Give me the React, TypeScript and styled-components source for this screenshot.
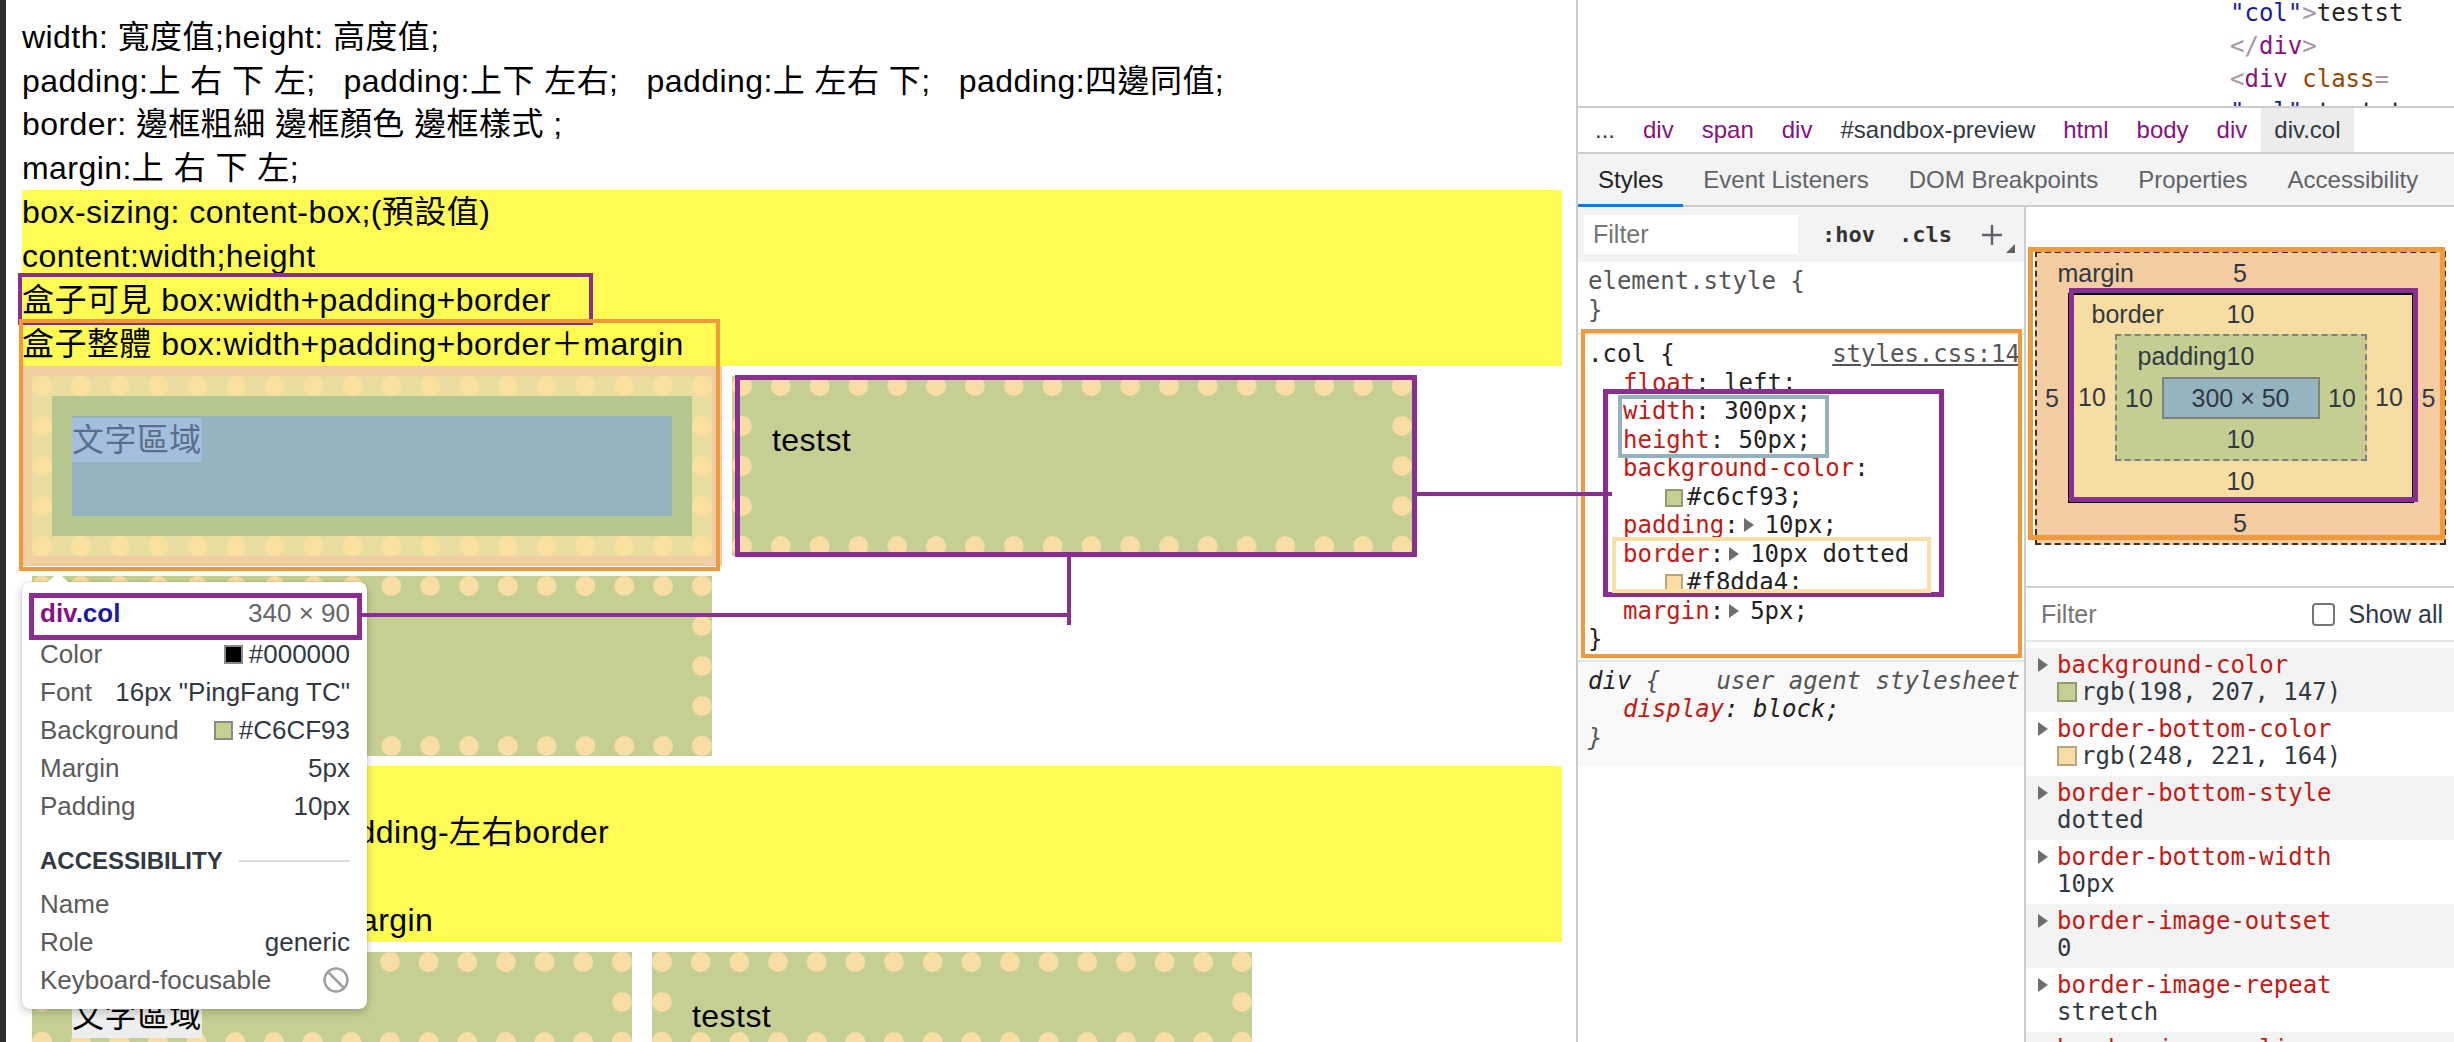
import React from "react";
import styled, { createGlobalStyle } from "styled-components";

const SANS = `"Liberation Sans", "Noto Sans CJK TC", sans-serif`;
const UI = `"Liberation Sans", "Noto Sans", sans-serif`;
const MONO = `"DejaVu Sans Mono", "Liberation Mono", monospace`;

const PURPLE = "#8a2f8f";
const ORANGE = "#f3993a";
const STEEL = "#93b2be";
const SAND = "#fbdfa6";

const GlobalStyle = createGlobalStyle`
  html, body { margin: 0; padding: 0; background: #ffffff; overflow: hidden; }
  #root { width: 2454px; height: 1042px; }
`;

const Screen = styled.div`
  position: relative;
  display: flex;
  width: 2454px;
  height: 1042px;
  overflow: hidden;
  background: #ffffff;
`;

const WindowEdge = styled.div`
  flex: none;
  width: 6px;
  background: #2e2e2e;
`;

/* ---------------- page ---------------- */

const Page = styled.main`
  flex: none;
  box-sizing: border-box;
  width: 1570px;
  height: 100%;
  padding: 16px 14px 0 16px;
  overflow: hidden;
  font-family: ${SANS};
  font-size: 32px;
  letter-spacing: 0.45px;
  color: #000;
`;

const TextLine = styled.div`
  line-height: 43.5px;
  white-space: pre;
`;

const Note = styled.section`
  background: #fefc54;
`;

const NoteLine = styled.div`
  line-height: 44px;
  white-space: pre;
`;

const ColRow = styled.div`
  display: flex;
  flex-wrap: wrap;
`;

const ColSlot = styled.div<{ $tint?: boolean }>`
  flex: none;
  padding: 10px;
  background: ${(p) => (p.$tint ? "#f2cca3" : "transparent")};
`;

const ColBox = styled.div<{ $borderBox?: boolean; $tint?: boolean }>`
  box-sizing: ${(p) => (p.$borderBox ? "border-box" : "content-box")};
  width: 600px;
  height: 100px;
  padding: 20px;
  border: 20px dotted ${(p) => (p.$tint ? "#fbe1a0" : "#f8dda4")};
  background: ${(p) =>
    p.$tint
      ? "linear-gradient(#b3c78f, #b3c78f) padding-box, #e9dea0"
      : "#c6cf93"};
`;

const ColContent = styled.div<{ $tint?: boolean }>`
  box-sizing: border-box;
  height: 100%;
  padding-top: 2px;
  line-height: 44px;
  white-space: nowrap;
  background: ${(p) => (p.$tint ? "#95b4c0" : "transparent")};
`;

const TextChip = styled.span<{ $tint?: boolean }>`
  display: inline-block;
  vertical-align: top;
  height: 44px;
  background: ${(p) => (p.$tint ? "#a4bedd" : "#eeeeee")};
  color: ${(p) => (p.$tint ? "#5b6e89" : "#000")};
`;

/* ---------------- overlays ---------------- */

type Rect = { $x: number; $y: number; $w: number; $h: number };

const Frame = styled.div<Rect & { $bw: number; $c: string }>`
  position: absolute;
  left: ${(p) => p.$x}px;
  top: ${(p) => p.$y}px;
  width: ${(p) => p.$w}px;
  height: ${(p) => p.$h}px;
  box-sizing: border-box;
  border: ${(p) => p.$bw}px solid ${(p) => p.$c};
  pointer-events: none;
`;

const Wire = styled.div<Rect>`
  position: absolute;
  left: ${(p) => p.$x}px;
  top: ${(p) => p.$y}px;
  width: ${(p) => p.$w}px;
  height: ${(p) => p.$h}px;
  background: ${PURPLE};
  pointer-events: none;
`;

/* ---------------- tooltip ---------------- */

const Tooltip = styled.div`
  position: absolute;
  left: 22px;
  top: 582px;
  width: 345px;
  height: 427px;
  box-sizing: border-box;
  padding: 9px 17px 0 18px;
  background: #fff;
  border-radius: 8px;
  box-shadow: 0 3px 10px rgba(0, 0, 0, 0.22), 0 0 0 1px rgba(0, 0, 0, 0.05);
  font-family: ${UI};
  font-size: 26px;
  color: #5a5a5a;

  &::before {
    content: "";
    position: absolute;
    left: 26px;
    top: -10px;
    border: 10px solid transparent;
    border-top: 0;
    border-bottom-color: #fff;
  }
`;

const TipHead = styled.div`
  height: 44px;
  display: flex;
  align-items: center;
  justify-content: space-between;
`;

const TipTag = styled.span`
  font-weight: bold;
  color: #881280;
`;

const TipClass = styled.span`
  color: #1a1aa6;
`;

const TipDims = styled.span`
  color: #666;
`;

const TipRow = styled.div`
  height: 38px;
  display: flex;
  align-items: center;
  justify-content: space-between;
  white-space: nowrap;
`;

const TipValue = styled.span`
  display: flex;
  align-items: center;
  gap: 6px;
  color: #303942;
`;

const TipSwatch = styled.span<{ $c: string }>`
  width: 19px;
  height: 19px;
  box-sizing: border-box;
  border: 2px solid #8a8a8a;
  background: ${(p) => p.$c};
`;

const TipSection = styled.div`
  margin-top: 16px;
  margin-bottom: 4px;
  height: 40px;
  display: flex;
  align-items: center;
  gap: 16px;
  font-size: 24px;
  font-weight: bold;
  color: #303942;
`;

const TipRule = styled.span`
  flex: 1;
  height: 2px;
  background: #dcdcdc;
`;

/* ---------------- devtools ---------------- */

const DevTools = styled.aside`
  flex: 1;
  min-width: 0;
  display: flex;
  flex-direction: column;
  border-left: 2px solid #cbcbcb;
  background: #fff;
  font-family: ${UI};
  color: #303942;
`;

const Tree = styled.div`
  flex: none;
  height: 108px;
  box-sizing: border-box;
  border-bottom: 2px solid #cdcdcd;
  overflow: hidden;
  padding-left: 652px;
  font-family: ${MONO};
  font-size: 24px;
  line-height: 33px;
`;

const TreeLines = styled.div`
  margin-top: -3px;
  white-space: pre;
`;

const tokenColors = {
  tag: "#881280",
  bracket: "#a894a6",
  attr: "#994500",
  value: "#1a1aa6",
  text: "#222222",
};

const Tk = styled.span<{ $k: keyof typeof tokenColors }>`
  color: ${(p) => tokenColors[p.$k]};
`;

const Crumbs = styled.nav`
  flex: none;
  height: 46px;
  box-sizing: border-box;
  border-bottom: 2px solid #cdcdcd;
  display: flex;
  align-items: stretch;
  padding-left: 3px;
  font-size: 24px;
  white-space: nowrap;
`;

const Crumb = styled.span<{ $tag?: boolean; $active?: boolean }>`
  display: flex;
  align-items: center;
  padding: 0 ${(p) => (p.$active ? 13 : 14)}px;
  color: ${(p) => (p.$tag ? "#881280" : "#303942")};
  background: ${(p) => (p.$active ? "#ececec" : "transparent")};
`;

const Tabs = styled.div`
  flex: none;
  height: 53px;
  display: flex;
  background: #f3f3f3;
  box-shadow: inset 0 -2px 0 #cdcdcd;
  font-size: 24px;
  white-space: nowrap;
`;

const Tab = styled.span<{ $active?: boolean }>`
  display: flex;
  align-items: center;
  padding: 0 20px 2px;
  color: ${(p) => (p.$active ? "#202124" : "#5f6368")};
  box-shadow: ${(p) => (p.$active ? "inset 0 -3px 0 #1a73e8" : "none")};
`;

const Panes = styled.div`
  flex: 1;
  min-height: 0;
  display: flex;
`;

const StylesPane = styled.section`
  flex: none;
  width: 448px;
  box-sizing: border-box;
  border-right: 2px solid #cdcdcd;
  overflow: hidden;
`;

const StylesToolbar = styled.div`
  height: 55px;
  display: flex;
  align-items: center;
  padding-left: 6px;
  background: #f3f3f3;
`;

const FilterField = styled.input`
  flex: none;
  width: 214px;
  height: 39px;
  box-sizing: border-box;
  margin: 0;
  border: none;
  outline: none;
  padding: 0 0 0 9px;
  background: #fff;
  font-family: ${UI};
  font-size: 25px;
  color: #333;
  &::placeholder {
    color: #757575;
  }
`;

const ToolText = styled.span<{ $gap: number }>`
  margin-left: ${(p) => p.$gap}px;
  font-family: ${MONO};
  font-weight: bold;
  font-size: 22px;
  color: #333;
`;

const ToolIcon = styled.svg<{ $gap: number }>`
  flex: none;
  margin-left: ${(p) => p.$gap}px;
`;

const CornerMark = styled.svg`
  flex: none;
  align-self: flex-end;
  margin: 0 0 9px 3px;
`;

const Rule = styled.div<{ $ua?: boolean; $pb: number }>`
  padding: 5px 4px ${(p) => p.$pb}px 10px;
  border-bottom: 2px solid ${(p) => (p.$ua ? "#f9f9f9" : "#e4e4e4")};
  background: ${(p) => (p.$ua ? "#f9f9f9" : "#fff")};
  font-family: ${MONO};
  font-size: 24px;
  line-height: 28.5px;
  color: #222;
  white-space: pre;
  font-style: ${(p) => (p.$ua ? "italic" : "normal")};
`;

const SelectorLine = styled.div`
  display: flex;
  justify-content: space-between;
`;

const Muted = styled.span`
  color: #555;
`;

const SourceLink = styled.span`
  color: #555;
  text-decoration: underline;
`;

const Decl = styled.div<{ $indent?: number }>`
  padding-left: ${(p) => p.$indent ?? 35}px;
`;

const PropName = styled.span`
  color: #c41a16;
`;

const Expander = styled.span`
  display: inline-block;
  width: 0;
  height: 0;
  border-top: 7px solid transparent;
  border-bottom: 7px solid transparent;
  border-left: 10px solid #6e6e6e;
  margin: 0 11px 0 5px;
  vertical-align: 1px;
`;

const Swatch = styled.span<{ $c: string; $size: number }>`
  display: inline-block;
  width: ${(p) => p.$size}px;
  height: ${(p) => p.$size}px;
  box-sizing: border-box;
  border: 2px solid rgba(0, 0, 0, 0.25);
  background: ${(p) => p.$c};
  margin-right: 4px;
  vertical-align: -2px;
`;

const ComputedPane = styled.section`
  flex: 1;
  min-width: 0;
  overflow: hidden;
`;

const BoxModelArea = styled.div`
  height: 381px;
  box-sizing: border-box;
  border-bottom: 2px solid #d0d0d0;
  display: flex;
  justify-content: center;
  align-items: flex-start;
  padding-top: 44px;
  font-family: ${UI};
  font-size: 25px;
  color: #303942;
`;

type LayerKind = "margin" | "border" | "padding";

const layerSpec: Record<
  LayerKind,
  { border: string; bg: string; top: number; bottom: number; label: number }
> = {
  margin: { border: "2px dashed #333", bg: "#f3cca2", top: 40, bottom: 40, label: 21 },
  border: { border: "2px solid #000", bg: "#f8dda3", top: 39, bottom: 40, label: 22 },
  padding: { border: "2px dashed #808080", bg: "#c4ce93", top: 41, bottom: 40, label: 21 },
};

const Layer = styled.div<{ $kind: LayerKind }>`
  display: flex;
  flex-direction: column;
  border: ${(p) => layerSpec[p.$kind].border};
  background: ${(p) => layerSpec[p.$kind].bg};
`;

const LayerTop = styled.div<{ $kind: LayerKind }>`
  height: ${(p) => layerSpec[p.$kind].top}px;
  display: grid;
  grid-template-columns: 1fr auto 1fr;
  align-items: center;
  white-space: nowrap;
`;

const LayerLabel = styled.span<{ $kind: LayerKind }>`
  padding-left: ${(p) => layerSpec[p.$kind].label}px;
`;

const LayerMiddle = styled.div`
  display: flex;
  align-items: stretch;
`;

const LayerSide = styled.span<{ $w: number }>`
  width: ${(p) => p.$w}px;
  display: flex;
  align-items: center;
  justify-content: center;
`;

const LayerBottom = styled.div<{ $kind: LayerKind }>`
  height: ${(p) => layerSpec[p.$kind].bottom}px;
  display: flex;
  align-items: center;
  justify-content: center;
`;

const ContentBox = styled.div`
  width: 158px;
  height: 42px;
  box-sizing: border-box;
  border: 2px solid #808080;
  background: #95b4c0;
  display: flex;
  align-items: center;
  justify-content: center;
  white-space: nowrap;
`;

const ComputedFilter = styled.div`
  height: 54px;
  box-sizing: border-box;
  border-bottom: 2px solid #e6e6e6;
  display: flex;
  align-items: center;
  justify-content: space-between;
  padding: 0 11px 0 15px;
  font-size: 25px;
`;

const SmallFilter = styled(FilterField)`
  width: 200px;
  padding: 0;
`;

const ShowAll = styled.label`
  display: flex;
  align-items: center;
  gap: 14px;
  color: #303942;
  white-space: nowrap;
`;

const CheckBox = styled.span`
  width: 23px;
  height: 23px;
  box-sizing: border-box;
  border: 2px solid #767676;
  border-radius: 4px;
  background: #fff;
`;

const ComputedList = styled.div`
  padding-top: 6px;
`;

const PropRow = styled.div<{ $shade?: boolean }>`
  height: 64px;
  box-sizing: border-box;
  padding: 4px 0 0 12px;
  background: ${(p) => (p.$shade ? "#f3f3f3" : "#fff")};
  font-family: ${MONO};
  font-size: 24px;
  line-height: 27px;
  white-space: nowrap;
`;

const RowExpander = styled(Expander)`
  margin: 0 9px 0 0;
`;

const PropValue = styled.div`
  padding-left: 19px;
  color: #303942;
`;

/* ---------------- data ---------------- */

const frames = [
  { x: 18, y: 273, w: 575, h: 52, bw: 4, c: PURPLE },
  { x: 19, y: 319, w: 701, h: 252, bw: 4, c: ORANGE },
  { x: 735, y: 375, w: 682, h: 182, bw: 5, c: PURPLE },
  { x: 29, y: 593, w: 333, h: 47, bw: 5, c: PURPLE },
  { x: 1581, y: 329, w: 441, h: 329, bw: 4, c: ORANGE },
  { x: 1603, y: 389, w: 341, h: 208, bw: 5, c: PURPLE },
  { x: 1618, y: 395, w: 211, h: 63, bw: 4, c: STEEL },
  { x: 1612, y: 537, w: 319, h: 56, bw: 4, c: SAND },
  { x: 2028, y: 247, w: 417, h: 293, bw: 5, c: ORANGE },
  { x: 2069, y: 288, w: 349, h: 214, bw: 5, c: PURPLE },
];

const wires = [
  { x: 362, y: 613, w: 709, h: 4 },
  { x: 1067, y: 557, w: 4, h: 68 },
  { x: 1412, y: 492, w: 200, h: 4 },
];

const computedProps: { name: string; value: string; swatch?: string }[] = [
  { name: "background-color", value: "rgb(198, 207, 147)", swatch: "#c6cf93" },
  { name: "border-bottom-color", value: "rgb(248, 221, 164)", swatch: "#f8dda4" },
  { name: "border-bottom-style", value: "dotted" },
  { name: "border-bottom-width", value: "10px" },
  { name: "border-image-outset", value: "0" },
  { name: "border-image-repeat", value: "stretch" },
  { name: "border-image-slice", value: "100%" },
];

const crumbs = [
  { t: "...", tag: false },
  { t: "div", tag: true },
  { t: "span", tag: true },
  { t: "div", tag: true },
  { t: "#sandbox-preview", tag: false },
  { t: "html", tag: true },
  { t: "body", tag: true },
  { t: "div", tag: true },
];

const tabs = ["Styles", "Event Listeners", "DOM Breakpoints", "Properties", "Accessibility"];

/* ---------------- parts ---------------- */

function BoxModel() {
  return (
    <Layer $kind="margin">
      <LayerTop $kind="margin">
        <LayerLabel $kind="margin">margin</LayerLabel>
        <span>5</span>
        <span />
      </LayerTop>
      <LayerMiddle>
        <LayerSide $w={31}>5</LayerSide>
        <Layer $kind="border">
          <LayerTop $kind="border">
            <LayerLabel $kind="border">border</LayerLabel>
            <span>10</span>
            <span />
          </LayerTop>
          <LayerMiddle>
            <LayerSide $w={45}>10</LayerSide>
            <Layer $kind="padding">
              <LayerTop $kind="padding">
                <LayerLabel $kind="padding">padding</LayerLabel>
                <span>10</span>
                <span />
              </LayerTop>
              <LayerMiddle>
                <LayerSide $w={45}>10</LayerSide>
                <ContentBox>300 × 50</ContentBox>
                <LayerSide $w={45}>10</LayerSide>
              </LayerMiddle>
              <LayerBottom $kind="padding">10</LayerBottom>
            </Layer>
            <LayerSide $w={45}>10</LayerSide>
          </LayerMiddle>
          <LayerBottom $kind="border">10</LayerBottom>
        </Layer>
        <LayerSide $w={30}>5</LayerSide>
      </LayerMiddle>
      <LayerBottom $kind="margin">5</LayerBottom>
    </Layer>
  );
}

function InspectTooltip() {
  return (
    <Tooltip>
      <TipHead>
        <TipTag>
          div<TipClass>.col</TipClass>
        </TipTag>
        <TipDims>340 × 90</TipDims>
      </TipHead>
      <TipRow>
        <span>Color</span>
        <TipValue>
          <TipSwatch $c="#000000" />
          #000000
        </TipValue>
      </TipRow>
      <TipRow>
        <span>Font</span>
        <TipValue>16px "PingFang TC"</TipValue>
      </TipRow>
      <TipRow>
        <span>Background</span>
        <TipValue>
          <TipSwatch $c="#c6cf93" />
          #C6CF93
        </TipValue>
      </TipRow>
      <TipRow>
        <span>Margin</span>
        <TipValue>5px</TipValue>
      </TipRow>
      <TipRow>
        <span>Padding</span>
        <TipValue>10px</TipValue>
      </TipRow>
      <TipSection>
        ACCESSIBILITY
        <TipRule />
      </TipSection>
      <TipRow>
        <span>Name</span>
        <TipValue />
      </TipRow>
      <TipRow>
        <span>Role</span>
        <TipValue>generic</TipValue>
      </TipRow>
      <TipRow>
        <span>Keyboard-focusable</span>
        <svg width="28" height="28" viewBox="0 0 28 28">
          <circle cx="14" cy="14" r="11.5" fill="none" stroke="#a0a0a0" strokeWidth="2.5" />
          <line x1="6" y1="6" x2="22" y2="22" stroke="#a0a0a0" strokeWidth="2.5" />
        </svg>
      </TipRow>
    </Tooltip>
  );
}

export default function App() {
  return (
    <Screen>
      <GlobalStyle />
      <WindowEdge />

      <Page>
        <TextLine>width: 寬度值;height: 高度值;</TextLine>
        <TextLine>
          {"padding:上 右 下 左;   padding:上下 左右;   padding:上 左右 下;   padding:四邊同值;"}
        </TextLine>
        <TextLine>border: 邊框粗細 邊框顏色 邊框樣式 ;</TextLine>
        <TextLine>margin:上 右 下 左;</TextLine>

        <Note>
          <NoteLine>box-sizing: content-box;(預設值)</NoteLine>
          <NoteLine>content:width;height</NoteLine>
          <NoteLine>盒子可見 box:width+padding+border</NoteLine>
          <NoteLine>盒子整體 box:width+padding+border＋margin</NoteLine>
        </Note>

        <ColRow>
          <ColSlot $tint>
            <ColBox $tint>
              <ColContent $tint>
                <TextChip $tint>文字區域</TextChip>
              </ColContent>
            </ColBox>
          </ColSlot>
          <ColSlot>
            <ColBox>
              <ColContent>testst</ColContent>
            </ColBox>
          </ColSlot>
          <ColSlot>
            <ColBox>
              <ColContent>
                <TextChip>文字區域</TextChip>
              </ColContent>
            </ColBox>
          </ColSlot>
        </ColRow>

        <Note>
          <NoteLine>box-sizing: border-box;</NoteLine>
          <NoteLine>content = width-左右padding-左右border</NoteLine>
          <NoteLine>盒子可見 box:width</NoteLine>
          <NoteLine>盒子整體 box:width＋margin</NoteLine>
        </Note>

        <ColRow>
          <ColSlot>
            <ColBox $borderBox>
              <ColContent>
                <TextChip>文字區域</TextChip>
              </ColContent>
            </ColBox>
          </ColSlot>
          <ColSlot>
            <ColBox $borderBox>
              <ColContent>testst</ColContent>
            </ColBox>
          </ColSlot>
        </ColRow>
      </Page>

      <DevTools>
        <Tree>
          <TreeLines>
            <div>
              <Tk $k="value">"col"</Tk>
              <Tk $k="bracket">&gt;</Tk>
              <Tk $k="text">testst</Tk>
            </div>
            <div>
              <Tk $k="bracket">&lt;/</Tk>
              <Tk $k="tag">div</Tk>
              <Tk $k="bracket">&gt;</Tk>
            </div>
            <div>
              <Tk $k="bracket">&lt;</Tk>
              <Tk $k="tag">div</Tk>
              <Tk $k="attr"> class</Tk>
              <Tk $k="bracket">=</Tk>
            </div>
            <div>
              <Tk $k="value">"col"</Tk>
              <Tk $k="bracket">&gt;</Tk>
              <Tk $k="text">testst</Tk>
            </div>
          </TreeLines>
        </Tree>

        <Crumbs>
          {crumbs.map((c, i) => (
            <Crumb key={i} $tag={c.tag}>
              {c.t}
            </Crumb>
          ))}
          <Crumb $active>div.col</Crumb>
        </Crumbs>

        <Tabs>
          {tabs.map((t, i) => (
            <Tab key={t} $active={i === 0}>
              {t}
            </Tab>
          ))}
        </Tabs>

        <Panes>
          <StylesPane>
            <StylesToolbar>
              <FilterField placeholder="Filter" readOnly />
              <ToolText $gap={24}>:hov</ToolText>
              <ToolText $gap={24}>.cls</ToolText>
              <ToolIcon $gap={29} width="22" height="22" viewBox="0 0 22 22">
                <path d="M11 1v20M1 11h20" stroke="#5f6368" strokeWidth="2.4" fill="none" />
              </ToolIcon>
              <CornerMark width="9" height="9" viewBox="0 0 9 9">
                <polygon points="9,0 9,9 0,9" fill="#5f6368" />
              </CornerMark>
            </StylesToolbar>

            <Rule $pb={9}>
              <Muted>element.style {"{"}</Muted>
              <div>
                <Muted>{"}"}</Muted>
              </div>
            </Rule>

            <Rule $pb={6}>
              <SelectorLine>
                <span>.col {"{"}</span>
                <SourceLink>styles.css:14</SourceLink>
              </SelectorLine>
              <Decl>
                <PropName>float</PropName>: left;
              </Decl>
              <Decl>
                <PropName>width</PropName>: 300px;
              </Decl>
              <Decl>
                <PropName>height</PropName>: 50px;
              </Decl>
              <Decl>
                <PropName>background-color</PropName>:
              </Decl>
              <Decl $indent={77}>
                <Swatch $c="#c6cf93" $size={18} />
                #c6cf93;
              </Decl>
              <Decl>
                <PropName>padding</PropName>:<Expander />10px;
              </Decl>
              <Decl>
                <PropName>border</PropName>:<Expander />10px dotted
              </Decl>
              <Decl $indent={77}>
                <Swatch $c="#f8dda4" $size={18} />
                #f8dda4;
              </Decl>
              <Decl>
                <PropName>margin</PropName>:<Expander />5px;
              </Decl>
              <div>{"}"}</div>
            </Rule>

            <Rule $ua $pb={12}>
              <SelectorLine>
                <span>
                  div <Muted>{"{"}</Muted>
                </span>
                <Muted>user agent stylesheet</Muted>
              </SelectorLine>
              <Decl>
                <PropName>display</PropName>: block;
              </Decl>
              <div>
                <Muted>{"}"}</Muted>
              </div>
            </Rule>
          </StylesPane>

          <ComputedPane>
            <BoxModelArea>
              <BoxModel />
            </BoxModelArea>
            <ComputedFilter>
              <SmallFilter placeholder="Filter" readOnly />
              <ShowAll>
                <CheckBox />
                Show all
              </ShowAll>
            </ComputedFilter>
            <ComputedList>
              {computedProps.map((p, i) => (
                <PropRow key={p.name} $shade={i % 2 === 0}>
                  <div>
                    <RowExpander />
                    <PropName>{p.name}</PropName>
                  </div>
                  <PropValue>
                    {p.swatch && <Swatch $c={p.swatch} $size={20} />}
                    {p.value}
                  </PropValue>
                </PropRow>
              ))}
            </ComputedList>
          </ComputedPane>
        </Panes>
      </DevTools>

      <InspectTooltip />

      {frames.map((f, i) => (
        <Frame key={i} $x={f.x} $y={f.y} $w={f.w} $h={f.h} $bw={f.bw} $c={f.c} />
      ))}
      {wires.map((w, i) => (
        <Wire key={i} $x={w.x} $y={w.y} $w={w.w} $h={w.h} />
      ))}
    </Screen>
  );
}
